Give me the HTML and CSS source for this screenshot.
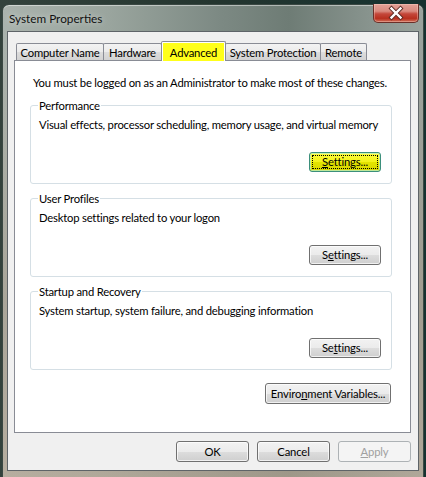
FILE: index.html
```html
<!DOCTYPE html>
<html>
<head>
<meta charset="utf-8">
<link rel="stylesheet" href="styles.css">
</head>
<body>
<div class="window">
  <div class="titlebar">
    <span class="title">System Properties</span>
    <div class="close">
      <svg width="44" height="18" viewBox="0 0 44 18">
        <path d="M17.5 4.5 L26.5 13.5 M26.5 4.5 L17.5 13.5" stroke="#5a2a22" stroke-width="4.2" stroke-linecap="square" fill="none"/>
        <path d="M17.5 4.5 L26.5 13.5 M26.5 4.5 L17.5 13.5" stroke="#ffffff" stroke-width="2.4" stroke-linecap="square" fill="none"/>
      </svg>
    </div>
  </div>
  <div class="client">
    <div class="tabs">
      <div class="tab tab-cn">Computer Name</div>
      <div class="tab tab-hw">Hardware</div>
      <div class="tab tab-adv selected"><span class="hl">Advanced</span></div>
      <div class="tab tab-sp">System Protection</div>
      <div class="tab tab-rm">Remote</div>
    </div>
    <div class="panel">
      <p class="intro">You must be logged on as an Administrator to make most of these changes.</p>
      <fieldset class="group">
        <legend>Performance</legend>
        <p class="desc">Visual effects, processor scheduling, memory usage, and virtual memory</p>
        <div class="btn-row"><button class="btn btn-set btn-focus"><u>S</u>ettings...</button></div>
      </fieldset>
      <fieldset class="group">
        <legend>User Profiles</legend>
        <p class="desc">Desktop settings related to your logon</p>
        <div class="btn-row"><button class="btn btn-set">S<u>e</u>ttings...</button></div>
      </fieldset>
      <fieldset class="group">
        <legend>Startup and Recovery</legend>
        <p class="desc">System startup, system failure, and debugging information</p>
        <div class="btn-row"><button class="btn btn-set">Se<u>t</u>tings...</button></div>
      </fieldset>
      <div class="env-row"><button class="btn btn-env">Enviro<u>n</u>ment Variables...</button></div>
    </div>
    <div class="dialog-buttons">
      <button class="btn btn-dlg">OK</button>
      <button class="btn btn-dlg">Cancel</button>
      <button class="btn btn-dlg btn-disabled"><u>A</u>pply</button>
    </div>
  </div>
</div>
</body>
</html>
```

FILE: styles.css
```css
html, body {
  margin: 0;
  padding: 0;
}
body {
  width: 426px;
  height: 477px;
  overflow: hidden;
  background: linear-gradient(to right, #33423c 0%, #24352f 50%, #163230 100%);
  font-family: Lato, "Liberation Sans", Arial, sans-serif;
  font-size: 11.25px;
  letter-spacing: -0.2px;
  color: #000;
  white-space: nowrap;
}
.window {
  margin: 4px 2px 0 2px;
  height: 490px;
  box-sizing: border-box;
  border: 1px solid #3a4843;
  border-radius: 7px 7px 0 0;
  padding: 0 4px;
  background:
    linear-gradient(to bottom, rgba(0,0,0,0) 0px, rgba(0,0,0,0) 40px, rgba(170,150,130,0.45) 300px, rgba(190,170,150,0.6) 470px),
    linear-gradient(to right, #aab3ad 0%, #9aa59e 25%, #7c8983 52%, #6e7c75 68%, #85918b 85%, #9aa39d 100%);
  box-shadow: inset 0 1px 0 rgba(255,255,255,0.45);
}
.titlebar {
  height: 26px;
  display: flex;
  justify-content: space-between;
  align-items: flex-start;
}
.title {
  margin-left: 2px;
  line-height: 27px;
  font-size: 11.75px;
  letter-spacing: 0;
  color: #111;
  text-shadow: 0 0 6px rgba(255,255,255,0.6);
}
.close {
  width: 46px;
  height: 19px;
  margin-top: -1px;
  box-sizing: border-box;
  border: 1px solid #6b2f28;
  border-top: none;
  border-radius: 0 0 5px 5px;
  background: linear-gradient(to bottom, #e3a297 0%, #d98a7e 40%, #c4473a 55%, #b8301f 80%, #d0705a 100%);
  box-shadow: inset 0 0 0 1px rgba(255,220,210,0.35);
  display: flex;
  align-items: center;
  justify-content: center;
}
.close svg {
  display: block;
}
.client {
  height: 440px;
  box-sizing: border-box;
  border: 1px solid #5e6468;
  background: #f0f0f0;
  padding: 9px 7px 7px 6px;
  display: flex;
  flex-direction: column;
}
.tabs {
  display: flex;
  align-items: flex-end;
  padding-left: 2px;
  height: 19px;
}
.tab {
  box-sizing: border-box;
  height: 17px;
  border: 1px solid #898c95;
  border-bottom: none;
  border-radius: 2px 2px 0 0;
  background: linear-gradient(to bottom, #f3f3f3 0%, #ebebeb 50%, #dddddd 51%, #d2d2d2 100%);
  display: flex;
  align-items: center;
  justify-content: center;
  line-height: 15px;
  margin-left: -1px;
}
.tab-cn { width: 88px; margin-left: 0; }
.tab-hw { width: 59px; }
.tab-adv { width: 65px; }
.tab-sp { width: 96px; }
.tab-rm { width: 47px; }
.tab.selected {
  height: 20px;
  margin-bottom: -1px;
  position: relative;
  z-index: 1;
  background: #ffffff;
  padding: 1px 1px 0 1px;
  align-items: stretch;
}
.hl {
  flex: 1;
  background: #ffff1a;
  display: flex;
  align-items: center;
  justify-content: center;
}
.panel {
  width: 397px;
  height: 373px;
  box-sizing: border-box;
  border: 1px solid #898c95;
  background: #ffffff;
}
.intro {
  margin: 14px 0 0 18px;
  line-height: 15px;
}
.group {
  box-sizing: border-box;
  width: 362px;
  margin: 8px 18px 0 15px;
  padding: 4px 10px 11px 8px;
  border: 1px solid #d5dfe5;
  border-radius: 3px;
  min-inline-size: 0;
}
.group + .group {
  margin-top: 7px;
}
.group legend {
  padding: 0 1px;
  margin-left: -1px;
  line-height: 15px;
}
.desc {
  margin: 0;
  line-height: 15px;
}
.btn-row {
  display: flex;
  justify-content: flex-end;
  margin-top: 20px;
}
.btn {
  box-sizing: border-box;
  height: 20px;
  padding: 0;
  font-family: Lato, "Liberation Sans", Arial, sans-serif;
  font-size: 11.25px;
  letter-spacing: -0.15px;
  color: #000;
  border: 1px solid #707070;
  border-radius: 3px;
  background: linear-gradient(to bottom, #f2f2f2 0%, #ebebeb 50%, #dddddd 51%, #cfcfcf 100%);
  box-shadow: inset 0 0 0 1px rgba(255,255,255,0.7);
  display: flex;
  align-items: center;
  justify-content: center;
  line-height: 14px;
  white-space: nowrap;
}
.btn u {
  text-decoration: underline;
  text-underline-offset: 1px;
}
.btn-set {
  width: 72px;
}
.btn-focus {
  border-color: #3c8f7c;
  background: linear-gradient(to bottom, #fbfb3c 0%, #f2f218 50%, #e4e400 51%, #d6d600 100%);
  box-shadow: inset 0 0 0 1px rgba(180,240,220,0.7);
  outline: 1px dotted #000;
  outline-offset: -4px;
}
.env-row {
  display: flex;
  justify-content: flex-end;
  margin: 13px 19px 0 0;
}
.btn-env {
  width: 126px;
  height: 21px;
}
.dialog-buttons {
  display: flex;
  justify-content: flex-end;
  gap: 8px;
  margin-top: 8px;
}
.btn-dlg {
  width: 73px;
  height: 21px;
}
.btn-disabled {
  color: #a0a0a0;
  border-color: #adb2b5;
  background: #f4f4f4;
  box-shadow: none;
}
```
